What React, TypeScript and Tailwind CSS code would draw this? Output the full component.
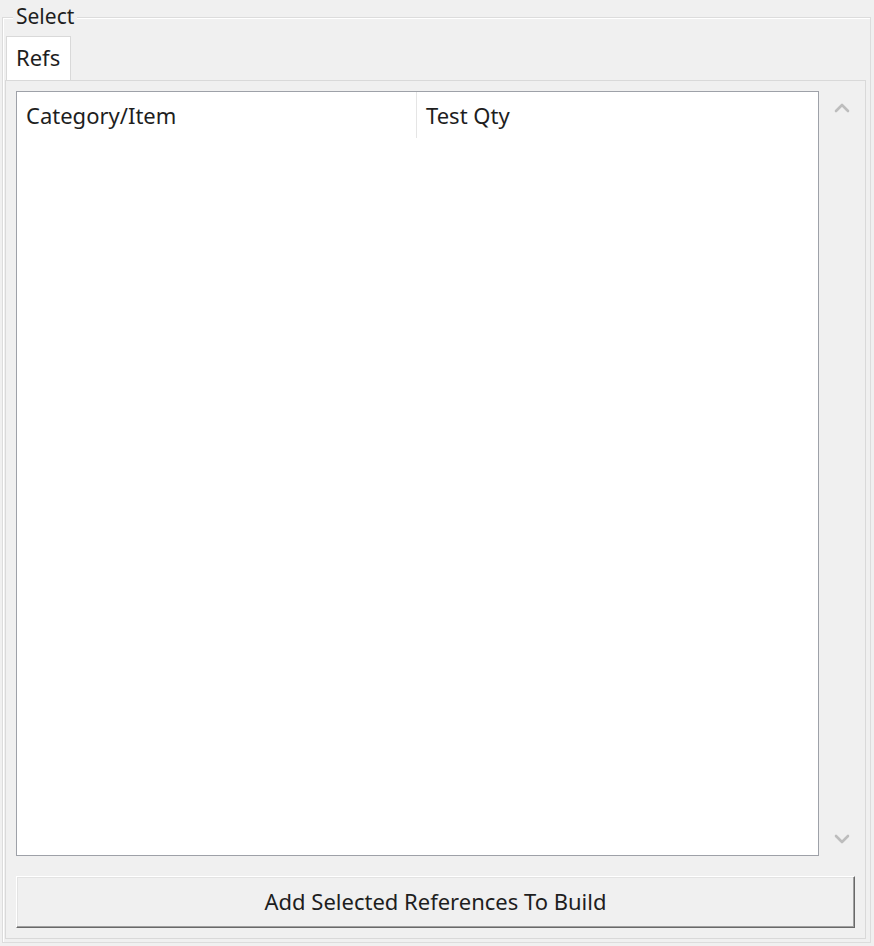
import { ChevronDown, ChevronUp } from "lucide-react";

const font = { fontFamily: '"Noto Sans", "Open Sans", Arial, sans-serif' };

function ColumnHeader() {
  return (
    <div className="flex h-[48px] shrink-0 pb-[2px] text-[22px] text-[#1e1e1e]">
      <div className="flex w-[400px] items-center border-r border-[#e5e5e5] pl-[9px]">Category/Item</div>
      <div className="flex flex-1 items-center pl-[9px]">Test Qty</div>
    </div>
  );
}

export default function App() {
  return (
    <div className="h-[946px] w-[874px] overflow-hidden bg-[#f0f0f0] pl-[2px] pt-[17px]" style={font}>
      <div className="relative flex h-[926px] w-[869px] flex-col border border-[#dcdcdc] pt-[18px] pl-[2px] shadow-[inset_1px_1px_0_#ffffff]">
        <span className="absolute -top-[15px] left-[10px] bg-[#f0f0f0] px-[3px] text-[21px] leading-[26px] text-[#1e1e1e]">Select</span>

        {/* tab strip */}
        <div className="flex h-[44px] shrink-0 pl-[1px]">
          <div className="relative z-10 -mb-[1px] flex h-[44px] w-[65px] items-center border border-b-0 border-[#d9d9d9] bg-white pb-[3px] pl-[9px] text-[22px] text-[#1e1e1e]">
            Refs
          </div>
        </div>

        {/* tab page */}
        <div className="flex h-[859px] w-[861px] flex-col border border-[#d9d9d9] bg-[#f0f0f0] pl-[10px] pt-[10px]">
          <div className="flex h-[765px] shrink-0">
            <div className="flex w-[803px] flex-col border border-[#9ea1a8] bg-white">
              <ColumnHeader />
              <div className="flex-1" />
            </div>
            <div className="flex w-[44px] flex-col items-center justify-between py-[5px] pl-[2px] text-[#bdbdbd]">
              <ChevronUp size={24} strokeWidth={2.6} />
              <ChevronDown size={24} strokeWidth={2.6} />
            </div>
          </div>

          <button className="mt-[20px] h-[52px] w-[839px] border border-b-[#696969] border-l-white border-r-[#696969] border-t-white bg-[#f0f0f0] pb-[2px] text-[22px] text-[#1e1e1e] shadow-[inset_-1px_-1px_0_#a0a0a0,inset_1px_1px_0_#e3e3e3]">
            Add Selected References To Build
          </button>
        </div>
      </div>
    </div>
  );
}
